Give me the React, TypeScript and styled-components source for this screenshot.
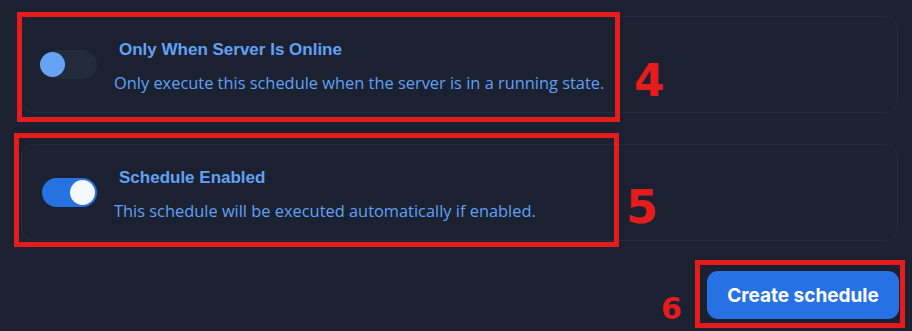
import React, { useState } from "react";
import styled, { createGlobalStyle } from "styled-components";

const Global = createGlobalStyle`
  html, body { margin: 0; padding: 0; background: #1b2130; }
  body { width: 912px; height: 331px; overflow: hidden; }
  * { box-sizing: border-box; }
`;

const Page = styled.div`
  position: relative;
  width: 912px;
  height: 331px;
  padding: 16px 14px 0 21px;
  display: flex;
  flex-direction: column;
  gap: 31px;
  background: #1b2130;
`;

const Card = styled.div`
  display: flex;
  align-items: center;
  gap: 17px;
  height: 97px;
  padding: 0 20px;
  border: 1px solid #232c3c;
  border-radius: 13px;
  background: #1b2130;
`;

const Track = styled.button<{ $on: boolean }>`
  position: relative;
  flex: none;
  width: 55px;
  height: 29px;
  border: none;
  padding: 0;
  border-radius: 15px;
  background: ${(p) => (p.$on ? "#2672e3" : "#212b3b")};
  cursor: pointer;
`;

const Knob = styled.span<{ $on: boolean }>`
  position: absolute;
  top: 2px;
  left: ${(p) => (p.$on ? "28px" : "-2px")};
  width: 25px;
  height: 25px;
  border-radius: 50%;
  background: ${(p) => (p.$on ? "#f6f8ff" : "#67a3f5")};
`;

const Texts = styled.div`
  display: flex;
  flex-direction: column;
  gap: 9px;
  padding-top: 4px;
`;

const Title = styled.div`
  padding-left: 5px;
  font-family: "Liberation Sans", Arial, sans-serif;
  font-weight: 700;
  font-size: 17px;
  line-height: 24px;
  color: #62a2f5;
`;

const Desc = styled.div`
  font-family: "Open Sans", "Noto Sans", sans-serif;
  font-size: 16.4px;
  line-height: 24px;
  color: #60a0f4;
`;

const Footer = styled.div`
  display: flex;
  justify-content: flex-end;
`;

const PrimaryButton = styled.button`
  width: 192px;
  height: 48px;
  margin-top: -1px;
  margin-right: -1px;
  border: none;
  border-radius: 11px;
  background: #2672e4;
  color: #ffffff;
  font-family: Inter, "Liberation Sans", sans-serif;
  font-weight: 700;
  font-size: 19px;
  cursor: pointer;
`;

const Mark = styled.div<{ $x: number; $y: number; $w: number; $h: number }>`
  position: absolute;
  left: ${(p) => p.$x}px;
  top: ${(p) => p.$y}px;
  width: ${(p) => p.$w}px;
  height: ${(p) => p.$h}px;
  border: 5px solid #e41c1c;
  pointer-events: none;
`;

const Digit = styled.div<{ $x: number; $y: number; $size: number }>`
  position: absolute;
  left: ${(p) => p.$x}px;
  top: ${(p) => p.$y}px;
  font-family: "DejaVu Sans", sans-serif;
  font-weight: 700;
  font-size: ${(p) => p.$size}px;
  line-height: 1;
  color: #e41c1c;
  pointer-events: none;
`;

function Toggle({ initial }: { initial: boolean }) {
  const [on, setOn] = useState(initial);
  return (
    <Track $on={on} onClick={() => setOn(!on)} aria-pressed={on}>
      <Knob $on={on} />
    </Track>
  );
}

export default function App() {
  return (
    <>
      <Global />
      <Page>
        <Card>
          <Toggle initial={false} />
          <Texts>
            <Title>Only When Server Is Online</Title>
            <Desc>Only execute this schedule when the server is in a running state.</Desc>
          </Texts>
        </Card>
        <Card>
          <Toggle initial={true} />
          <Texts>
            <Title>Schedule Enabled</Title>
            <Desc>This schedule will be executed automatically if enabled.</Desc>
          </Texts>
        </Card>
        <Footer>
          <PrimaryButton>Create schedule</PrimaryButton>
        </Footer>
        <Mark $x={17} $y={12} $w={603} $h={110} />
        <Mark $x={14} $y={133} $w={605} $h={114} />
        <Mark $x={695} $y={260} $w={210} $h={68} />
        <Digit $x={634} $y={59} $size={44}>4</Digit>
        <Digit $x={626} $y={184} $size={46}>5</Digit>
        <Digit $x={661} $y={294} $size={30}>6</Digit>
      </Page>
    </>
  );
}
